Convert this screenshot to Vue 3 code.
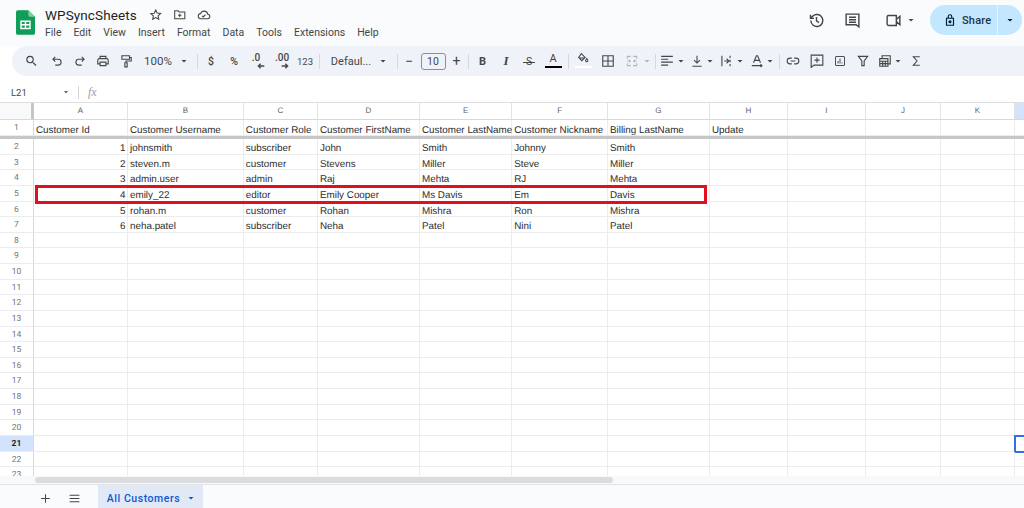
<script setup>
const colWidths = [94, 115.8, 74.2, 102, 92.2, 95.8, 102, 78, 78, 75, 74, 80]
const letters = ['A','B','C','D','E','F','G','H','I','J','K','L']
const colTemplate = '34px ' + colWidths.map(w => w + 'px').join(' ')
const header = ['Customer Id','Customer Username','Customer Role','Customer FirstName','Customer LastName','Customer Nickname','Billing LastName','Update']
const data = {
  2: [1,'johnsmith','subscriber','John','Smith','Johnny','Smith'],
  3: [2,'steven.m','customer','Stevens','Miller','Steve','Miller'],
  4: [3,'admin.user','admin','Raj','Mehta','RJ','Mehta'],
  5: [4,'emily_22','editor','Emily Cooper','Ms Davis','Em','Davis'],
  6: [5,'rohan.m','customer','Rohan','Mishra','Ron','Mishra'],
  7: [6,'neha.patel','subscriber','Neha','Patel','Nini','Patel']
}
const rows = []
for (let r = 2; r <= 23; r++) rows.push({ n: r, cells: letters.map((_, i) => (data[r] && data[r][i] !== undefined) ? data[r][i] : '') })

const menu = ['File','Edit','View','Insert','Format','Data','Tools','Extensions','Help']

const P = {
  search: 'M15.5 14h-.79l-.28-.27A6.47 6.47 0 0 0 16 9.5 6.5 6.5 0 1 0 9.5 16c1.61 0 3.09-.59 4.23-1.57l.27.28v.79l5 4.99L20.49 19l-4.99-5zm-6 0C7.01 14 5 11.99 5 9.5S7.01 5 9.5 5 14 7.01 14 9.5 11.99 14 9.5 14z',
  undo: 'M9 5 5 9l4 4M5 9h9a5 5 0 0 1 0 10H9',
  redo: 'M15 5l4 4-4 4M19 9h-9a5 5 0 0 0 0 10h5',
  print: 'M7 8V4h10v4M7 17H3v-6a3 3 0 0 1 3-3h12a3 3 0 0 1 3 3v6h-4M7 14h10v6H7z',
  paint: 'M5 3h13v6H5zM18 6h3v6h-9v3M10 15h4v7h-4z',
  dec: 'M22 12H4M11 5l-7 7 7 7',
  inc: 'M2 12h18M13 5l7 7-7 7',
  caret: 'M7 10l5 5 5-5z',
  fill: 'M8 3l7 7-6 6-6-6zM4 11h10M18 12c1.2 1.8 2 3 2 4a2 2 0 0 1-4 0c0-1 .8-2.2 2-4z',
  borders: 'M3 3h18v18H3zM12 3v18M3 12h18',
  merge: 'M4 4h6M14 4h6M4 20h6M14 20h6M4 4v4M4 16v4M20 4v4M20 16v4M4 12h5M7 10l2 2-2 2M20 12h-5M17 10l-2 2 2 2',
  halign: 'M2 4h20M2 9h12M2 14h20M2 19h12',
  valign: 'M12 3v12M7 10.5l5 5 5-5M4 21h16',
  wrap: 'M5 3v18M19 3v4M19 10v4M19 17v4M9 12h8M13 8l4 4-4 4',
  rotate: 'M6 15 11 3h2l5 12M8 11h8M3 20h17M18 17.5l2.5 2.5-2.5 2.5',
  link: 'M10 7H7a5 5 0 0 0 0 10h3M14 7h3a5 5 0 0 1 0 10h-3M8 12h8',
  comment: 'M2 2h20v17H7l-5 4zM12 6v9M7.5 10.5h9',
  chart: 'M4 3h16a1 1 0 0 1 1 1v16a1 1 0 0 1-1 1H4a1 1 0 0 1-1-1V4a1 1 0 0 1 1-1zM8 17v-5M12 17V7M16 17v-2',
  filter: 'M4 4h16l-6 8v8h-4v-8z',
  functions: 'M7 7V3h14v14h-4M3 8h14v13H3zM3 12.5h14M8 12.5V21M12.5 12.5V21M3 16.5h14',
  sigma: 'M18 4H6l7 8-7 8h12',
  history: 'M4 12a8.5 8.5 0 1 0 2.6-6.1L3.5 9M3.5 4v5h5M12 7v5.5l3.5 2.5',
  chat: 'M3 3h18v18l-4-3H3zM7 7.5h10M7 11h10M7 14.5h10',
  video: 'M3 7a2 2 0 0 1 2-2h11v14H5a2 2 0 0 1-2-2zM16 10.5 21 6v12l-5-4.5z',
  lock: 'M6 9h12v12H6zM9 9V6a3 3 0 0 1 6 0v3',
  star: 'M12 3.5l2.6 5.6 6.1.7-4.5 4.1 1.2 6L12 16.9 6.6 20l1.2-6-4.5-4.1 6.1-.7z',
  folder: 'M3 5h6l2 2h10v12H3zM12 10v6M9 13h6',
  cloud: 'M7 19a4.5 4.5 0 0 1-.6-9A6.5 6.5 0 0 1 19 11a4 4 0 0 1-.5 8zM9 14l2 2 4-4',
  menu: 'M3 6h18M3 12h18M3 18h18',
  plus: 'M12 4v16M4 12h16'
}
const tools = [
  { c: 31, p: P.search, fill: true, s: 15 },
  { c: 57, p: P.undo }, { c: 80, p: P.redo }, { c: 103, p: P.print }, { c: 126, p: P.paint },
  { c: 158, t: '100%', w: 30, cls: 'zoom' }, { c: 184, p: P.caret, fill: true, s: 12 },
  { c: 197, sep: 1 },
  { c: 211, t: '$', w: 12, cls: 'sym' }, { c: 234, t: '%', w: 14, cls: 'sym' },
  { c: 258, t: '.0', w: 14, cls: 'dec left', p: P.dec }, { c: 282, t: '.00', w: 14, cls: 'dec', p: P.inc },
  { c: 305, t: '123', w: 18, cls: 'num' },
  { c: 319, sep: 1 },
  { c: 351, t: 'Defaul...', w: 42, cls: 'zoom small' }, { c: 383, p: P.caret, fill: true, s: 12 },
  { c: 397, sep: 1 },
  { c: 409, t: '−', w: 10, cls: 'sym big' }, { c: 433, t: '10', w: 25, cls: 'size' }, { c: 456.5, t: '+', w: 10, cls: 'sym big' },
  { c: 468, sep: 1 },
  { c: 482.5, t: 'B', w: 10, cls: 'bold' }, { c: 506, t: 'I', w: 10, cls: 'ital' },
  { c: 529, t: 'S', w: 14, cls: 'strike' }, { c: 553, t: 'A', w: 17, cls: 'color' },
  { c: 568.5, sep: 1 },
  { c: 583, p: P.fill, bar: 1, w: 17, cls: 'fillt' }, { c: 607.5, p: P.borders }, { c: 632, p: P.merge, dim: 1 }, { c: 647, p: P.caret, fill: true, s: 12, dim: 1 },
  { c: 655, sep: 1 },
  { c: 667, p: P.halign }, { c: 681, p: P.caret, fill: true, s: 12 },
  { c: 697, p: P.valign }, { c: 710, p: P.caret, fill: true, s: 12 },
  { c: 726, p: P.wrap }, { c: 740, p: P.caret, fill: true, s: 12 },
  { c: 757, p: P.rotate }, { c: 770, p: P.caret, fill: true, s: 12 },
  { c: 779, sep: 1 },
  { c: 793, p: P.link }, { c: 817, p: P.comment }, { c: 840, p: P.chart, s: 12 }, { c: 863, p: P.filter },
  { c: 885, p: P.functions }, { c: 898, p: P.caret, fill: true, s: 12 }, { c: 916, p: P.sigma, s: 13 }
]
let end = 12
const toolItems = tools.map(t => {
  const w = t.sep ? 1 : (t.w || t.s || 14)
  const left = t.c - w / 2
  const m = left - end
  end = left + w
  return { ...t, box: { marginLeft: m + 'px', width: w + 'px' } }
})
</script>

<template>
  <div class="page">
    <header class="top">
      <svg class="logo" viewBox="0 0 20 26">
        <path d="M2 0h11l7 7v17a2 2 0 0 1-2 2H2a2 2 0 0 1-2-2V2a2 2 0 0 1 2-2z" fill="#0f9d58"/>
        <path d="M13 0l7 7h-5a2 2 0 0 1-2-2z" fill="#87ce9f"/>
        <path d="M4.5 11h11v9h-11zM6 12.5v2.2h3.2v-2.2zM10.8 12.5v2.2H14v-2.2zM6 16.2v2.3h3.2v-2.3zM10.8 16.2v2.3H14v-2.3z" fill="#fff" fill-rule="evenodd"/>
      </svg>
      <div class="titles">
        <div class="title-row">
          <span class="doc">WPSyncSheets</span>
          <svg class="ti first" viewBox="0 0 24 24"><path :d="P.star"/></svg>
          <svg class="ti" viewBox="0 0 24 24"><path :d="P.folder"/></svg>
          <svg class="ti" viewBox="0 0 24 24"><path :d="P.cloud"/></svg>
        </div>
        <nav class="menu"><span v-for="m in menu" :key="m">{{ m }}</span></nav>
      </div>
      <div class="actions">
        <svg class="act" viewBox="0 0 24 24"><path :d="P.history"/></svg>
        <svg class="act chat" viewBox="0 0 24 24"><path :d="P.chat"/></svg>
        <svg class="act vid" viewBox="0 0 24 24"><path :d="P.video"/></svg>
        <svg class="car" viewBox="0 0 24 24"><path :d="P.caret"/></svg>
        <div class="share">
          <div class="share-main">
            <svg class="lock" viewBox="0 0 24 24"><path :d="P.lock"/><circle cx="12" cy="15" r="1.6" fill="#001d35"/></svg>
            <span>Share</span>
          </div>
          <div class="share-drop"><svg viewBox="0 0 24 24"><path :d="P.caret"/></svg></div>
        </div>
      </div>
    </header>

    <div class="toolbar">
      <template v-for="(t, i) in toolItems" :key="i">
        <i v-if="t.sep" class="sep" :style="t.box"></i>
        <span v-else class="tool" :class="[t.cls, { dim: t.dim }]" :style="t.box">
          <em v-if="t.t">{{ t.t }}</em>
          <svg v-if="t.p" viewBox="0 0 24 24" :class="{ solid: t.fill }"><path :d="t.p"/></svg>
          <b v-if="t.bar" class="fillbar"></b>
        </span>
      </template>
    </div>

    <div class="formula">
      <span class="ref">L21</span>
      <svg class="fcar" viewBox="0 0 24 24"><path :d="P.caret"/></svg>
      <i class="fsep"></i>
      <span class="fx">fx</span>
    </div>

    <div class="sheet">
      <div class="head-row" :style="{ gridTemplateColumns: colTemplate }">
        <div class="corner"></div>
        <div v-for="l in letters" :key="l" class="col-h" :class="{ on: l === 'L' }">{{ l === 'L' ? '' : l }}</div>
      </div>
      <div class="row first-row" :style="{ gridTemplateColumns: colTemplate }">
        <div class="row-h">1</div>
        <div v-for="(l, i) in letters" :key="l" class="cell">{{ header[i] }}</div>
      </div>
      <div class="row" v-for="r in rows" :key="r.n" :style="{ gridTemplateColumns: colTemplate }">
        <div class="row-h" :class="{ on: r.n === 21 }">{{ r.n }}</div>
        <div v-for="(c, i) in r.cells" :key="i" class="cell" :class="{ num: typeof c === 'number', sel: r.n === 21 && i === 11 }">{{ c }}</div>
      </div>
      <div class="red-box"></div>
      <div class="scroll-strip"><div class="thumb"></div></div>
    </div>

    <footer class="tabs">
      <svg class="fic plus" viewBox="0 0 24 24"><path :d="P.plus"/></svg>
      <svg class="fic" viewBox="0 0 24 24"><path :d="P.menu"/></svg>
      <div class="tab">
        <span>All Customers</span>
        <svg viewBox="0 0 24 24"><path :d="P.caret"/></svg>
      </div>
    </footer>
  </div>
</template>

<style>
html, body { margin: 0; background: #fff; overflow: hidden; }
</style>

<style scoped>
.page { width: 1024px; height: 508px; display: flex; flex-direction: column; overflow: hidden; background: #fff; font-family: "Open Sans", "Noto Sans", sans-serif; color: #1f1f1f; }
svg { display: block; fill: none; stroke: #444746; stroke-width: 2; }

.top { height: 46px; flex: none; background: #f9fbfd; display: flex; padding-left: 16px; box-sizing: border-box; }
.logo { width: 19px; height: 25px; margin-top: 10px; stroke: none; flex: none; }
.titles { margin-left: 10px; }
.title-row { display: flex; align-items: center; height: 16px; margin-top: 7px; }
.doc { color: #1f1f1f; font-family: Roboto, sans-serif; font-size: 13.5px; letter-spacing: .1px; width: 92px; }
.ti { width: 13.5px; height: 13.5px; margin-left: 10.5px; stroke-width: 1.9; }
.ti.first { margin-left: 12px; }
.menu { display: flex; gap: 12px; font-size: 10.5px; color: #444746; margin-top: 1px; line-height: 18px; font-family: Roboto, sans-serif; }
.actions { margin-left: auto; display: flex; align-items: center; height: 34px; margin-top: 3px; }
.act { width: 17px; height: 17px; }
.chat { margin-left: 19px; }
.vid { margin-left: 23.5px; }
.car { width: 12px; height: 12px; fill: #444746; stroke: none; margin: 0 13px 0 3.5px; }
.share { width: 92px; height: 30px; margin-right: 2px; display: flex; background: #c2e7ff; border-radius: 15px; overflow: hidden; font-size: 11px; font-weight: 500; color: #1d3446; font-family: Roboto, sans-serif; letter-spacing: .2px; }
.share-main { flex: 1; display: flex; align-items: center; padding-left: 12.5px; gap: 5.5px; border-right: 1px solid #e3f3ff; }
.lock { width: 14px; height: 14px; stroke: #001d35; }
.share-drop { width: 24px; display: flex; align-items: center; justify-content: center; }
.share-drop svg { width: 12px; height: 12px; fill: #001d35; stroke: none; }

.toolbar { height: 30px; flex: none; margin-left: 12px; background: #eff3f9; border-radius: 15px 0 0 15px; display: flex; align-items: center; }
.toolbar > :first-child { margin-left: 11.5px !important; }
.tool { height: 20px; flex: none; display: flex; align-items: center; justify-content: center; position: relative; color: #444746; box-sizing: border-box; }
.tool svg { width: 100%; height: 14px; stroke-width: 1.9; }
.tool svg.solid { fill: #444746; stroke: none; }
.tool em { font-style: normal; white-space: nowrap; font-size: 11px; font-family: Roboto, sans-serif; }
.sep { height: 15px; background: #d5d8dc; flex: none; }
.zoom em { font-size: 11.5px; }
.small em { font-size: 11px; }
.sym em { font-size: 10.5px; font-weight: 500; }
.big em { font-size: 14px; font-weight: 400; }
.num em { font-size: 9.5px; }
.dec { flex-direction: column; justify-content: flex-start; }
.dec em { font-size: 10px; font-weight: 500; line-height: 9px; margin-top: 2px; }
.dec svg { height: 8px; width: 8px; stroke-width: 4; margin-left: auto; margin-top: 0; }
.dec.left em { margin-left: -4px; }
.dec.left svg { margin-right: 0; }
.size { border: 1px solid #8e918f; border-radius: 3px; height: 17px; }
.size em { font-size: 10.5px; }
.bold em { font-weight: 700; font-size: 11px; }
.ital em { font-style: italic; font-family: "Liberation Serif", serif; font-size: 13px; font-weight: 700; }
.strike em { font-size: 10.5px; position: relative; }
.strike em::after { content: ""; position: absolute; left: -3px; right: -3px; top: 7px; height: 1px; background: #444746; }
.color { flex-direction: column; }
.color em { font-size: 11px; line-height: 12px; margin-top: -4px; }
.color::after { content: ""; position: absolute; left: 0; right: 0; bottom: 3px; height: 2.5px; background: #000; }
.fillt svg { height: 13px; margin-top: -6px; }
.fillbar { position: absolute; bottom: 3px; left: 0; right: 0; height: 2.5px; background: #fff; }
.dim { opacity: .35; }

.formula { height: 26px; flex: none; box-sizing: border-box; padding-top: 6px; display: flex; align-items: center; color: #444746; }
.ref { font-size: 9.5px; margin-left: 11px; width: 50px; font-family: Roboto, sans-serif; }
.fcar { width: 10px; height: 10px; fill: #444746; stroke: none; }
.fsep { width: 1px; height: 13px; background: #d5d5d5; margin-left: 7px; }
.fx { font-family: "Liberation Serif", serif; font-style: italic; font-size: 12px; margin-left: 9px; color: #9aa0a6; }

.sheet { position: relative; flex: 1; min-height: 0; overflow: hidden; border-top: 1px solid #dedede; font-family: "Liberation Sans", Arial, sans-serif; text-rendering: geometricPrecision; }
.head-row, .row { display: grid; }
.head-row { height: 17px; }
.corner { background: #f8f9fa; border-right: 3px solid #c4c7c5; border-bottom: 1px solid #d9d9d9; box-sizing: border-box; }
.col-h { font-size: 8px; color: #5f6368; text-align: center; line-height: 15px; border-right: 1px solid #e3e3e3; border-bottom: 1px solid #d9d9d9; box-sizing: border-box; }
.col-h.on { background: #d3e3fd; }
.row { height: 15.63px; box-sizing: border-box; grid-template-rows: minmax(0, 1fr); }
.first-row { height: 19px; border-bottom: 3px solid #c7c7c7; }
.row-h { font-size: 8.5px; color: #70757a; text-align: center; line-height: 15px; padding-top: 1px; border-right: 1px solid #d9d9d9; border-bottom: 1px solid #ececec; box-sizing: border-box; background: #fff; font-family: Roboto, sans-serif; }
.row-h.on { background: #d3e3fd; color: #1f1f1f; font-weight: 700; }
.cell { font-size: 9.85px; color: #2d2d2d; line-height: 15px; padding: 2px 2px 0; white-space: nowrap; overflow: visible; box-sizing: border-box; border-right: 1px solid #ececec; border-bottom: 1px solid #ececec; min-width: 0; }
.first-row .cell { padding-top: 3px; }
.cell.num { text-align: right; padding-right: 1.5px; }
.cell.sel { outline: 2px solid #2f72e4; outline-offset: -1px; }
.red-box { position: absolute; left: 35px; top: 82px; width: 672px; height: 19px; box-sizing: border-box; border: 3px solid #e20f1e; }
.scroll-strip { position: absolute; left: 0; right: 0; bottom: 0; height: 8px; background: #f8f9fa; }
.thumb { width: 578px; height: 6px; margin-left: 35px; margin-top: 1px; background: #dadce0; border-radius: 3px; }

.tabs { height: 24px; flex: none; background: #f9fbfd; border-top: 1px solid #e3e3e3; display: flex; align-items: center; box-sizing: border-box; }
.fic { width: 13px; height: 13px; margin-left: 16px; margin-top: 3px; stroke-width: 1.9; }
.fic.plus { margin-left: 39px; }
.tab { height: 100%; width: 105px; margin-left: 17px; padding-top: 3px; padding-left: 3px; box-sizing: border-box; background: #e1e9f7; display: flex; align-items: center; justify-content: center; gap: 5px; color: #0b57d0; font-size: 10.5px; font-weight: 500; font-family: Roboto, sans-serif; letter-spacing: .55px; }
.tab svg { width: 12px; height: 12px; fill: #0b57d0; stroke: none; }
</style>
